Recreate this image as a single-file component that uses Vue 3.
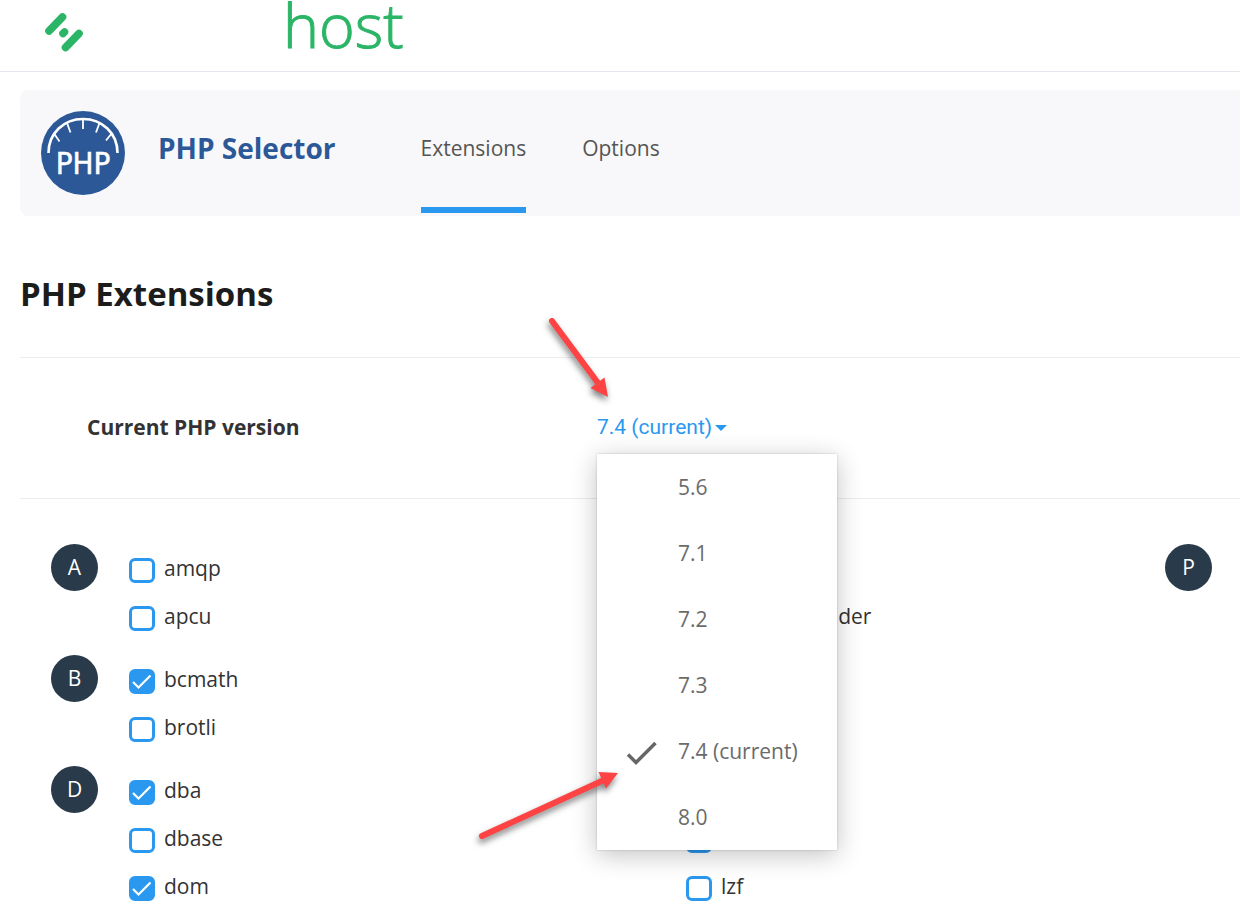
<script setup>
import { ref } from 'vue'

const versions = [
  { id: '5.6', label: '5.6' },
  { id: '7.1', label: '7.1' },
  { id: '7.2', label: '7.2' },
  { id: '7.3', label: '7.3' },
  { id: '7.4', label: '7.4 (current)' },
  { id: '8.0', label: '8.0' },
]
const selected = ref('7.4')

const columns = ref([
  [
    { letter: 'A', items: [{ name: 'amqp', on: false }, { name: 'apcu', on: false }] },
    { letter: 'B', items: [{ name: 'bcmath', on: true }, { name: 'brotli', on: false }] },
    {
      letter: 'D',
      items: [{ name: 'dba', on: true }, { name: 'dbase', on: false }, { name: 'dom', on: true }],
    },
  ],
  [
    { letter: 'I', items: [{ name: 'imap', on: true }, { name: 'ioncube_loader', on: false }] },
    { letter: 'J', items: [{ name: 'json', on: true }] },
    {
      letter: 'L',
      items: [
        { name: 'ldap', on: false },
        { name: 'leveldb', on: false },
        { name: 'luasandbox', on: true },
        { name: 'lzf', on: false },
      ],
    },
  ],
  [{ letter: 'P', items: [] }],
])
</script>

<template>
  <div class="page">
    <header class="topbar">
      <svg class="mark" width="40" height="40" viewBox="0 0 40 40" aria-hidden="true">
        <g stroke="#2bb567" stroke-width="7.600" stroke-linecap="round">
          <path d="M5 19L18.500 5" />
          <path d="M19 21.500L20.500 20" />
          <path d="M21.500 35.500L35 21.500" />
        </g>
      </svg>
      <span class="brand">host</span>
    </header>

    <main>
      <nav class="banner">
        <svg class="badge" width="84" height="84" viewBox="0 0 84 84" aria-hidden="true">
          <circle cx="42" cy="42" r="42" fill="#2c5898" />
          <g fill="none" stroke="#fff">
            <path d="M7.500 42C7.500 22 23 8 42 8S76.500 22 76.500 42" stroke-width="2.600" />
            <path
              d="M42 8v10M26 12l3.500 9.500M58.500 12l-3.500 9.500M13 22.500l5.500 8M71 22l-6 7.500"
              stroke-width="1.800"
            />
          </g>
          <text x="42" y="63" class="badge-text">PHP</text>
        </svg>
        <span class="product">PHP Selector</span>
        <a class="tab active" href="#extensions">Extensions</a>
        <a class="tab" href="#options">Options</a>
      </nav>

      <h1>PHP Extensions</h1>

      <section class="version">
        <span id="version-label" class="version-label">Current PHP version</span>
        <div class="dropdown">
          <button class="trigger" type="button" aria-haspopup="listbox" aria-expanded="true">
            7.4 (current)<span class="caret"></span>
          </button>
          <div class="menu" role="listbox" aria-labelledby="version-label">
            <button
              v-for="v in versions"
              :key="v.id"
              class="option"
              type="button"
              role="option"
              :aria-selected="v.id === selected"
              @click="selected = v.id"
            >
              <span class="tick">
                <svg v-if="v.id === selected" width="32" height="26" viewBox="0 0 32 26">
                  <path d="M2 13.500l8 8L29.500 2" fill="none" stroke="#666" stroke-width="3.500" />
                </svg>
              </span>
              {{ v.label }}
            </button>
          </div>
          <svg class="arrows" width="160" height="540" viewBox="0 0 160 540" aria-hidden="true">
            <g fill="#fd4343" stroke="#fd4343">
              <path d="M82 11L128 73" stroke-width="6" stroke-linecap="round" />
              <path d="M138 87L120.500 78L134.500 67.500z" stroke="none" />
              <path d="M12 526L134 470" stroke-width="6" stroke-linecap="round" />
              <path d="M148 463L136 478.500L128.500 462z" stroke="none" />
            </g>
          </svg>
        </div>
      </section>

      <div class="columns">
        <div v-for="(column, c) in columns" :key="c" class="column">
          <section v-for="group in column" :key="group.letter" class="group">
            <span class="letter">{{ group.letter }}</span>
            <div v-if="group.items.length" class="items">
              <label v-for="item in group.items" :key="item.name" class="item">
                <input v-model="item.on" type="checkbox" />
                <svg class="check" width="26" height="25" viewBox="0 0 26 25" aria-hidden="true">
                  <path d="M4 13l5.500 5.500L21.500 6.500" fill="none" stroke="#fff" stroke-width="2.200" />
                </svg>
                <span>{{ item.name }}</span>
              </label>
            </div>
          </section>
        </div>
      </div>
    </main>
  </div>
</template>

<style>
body {
  margin: 0;
  background: #fff;
}
html {
  overflow: hidden;
}
</style>

<style scoped>
.page {
  font-family: 'Open Sans', 'Noto Sans', sans-serif;
  font-size: 21px;
  line-height: 28px;
  color: #333;
}

.topbar {
  display: flex;
  align-items: flex-start;
  box-sizing: border-box;
  height: 72px;
  padding-left: 44px;
  border-bottom: 1px solid #e6e6ee;
}

.mark {
  margin-top: 12px;
}

.brand {
  margin-left: 199px;
  font-size: 61px;
  font-weight: 300;
  line-height: 50px;
  color: #2bb567;
  -webkit-text-stroke: 1px #2bb567;
}

main {
  padding-left: 20px;
}

.banner {
  display: flex;
  align-items: center;
  height: 126px;
  margin-top: 18px;
  padding-left: 21px;
  border-radius: 8px 0 0 8px;
  background: #f8f8fa;
}

.badge-text {
  font-family: 'DejaVu Sans Condensed', 'DejaVu Sans', sans-serif;
  font-size: 31px;
  font-stretch: condensed;
  fill: #fff;
  stroke: #fff;
  stroke-width: 0.5;
  text-anchor: middle;
}

.product {
  margin: 0 85px 10px 33px;
  font-size: 28px;
  font-weight: 700;
  color: #2c5898;
}

.tab {
  box-sizing: border-box;
  height: 120px;
  margin-right: 56px;
  padding-top: 41px;
  border-bottom: 6px solid transparent;
  color: #555;
  text-decoration: none;
}

.tab.active {
  border-bottom-color: #2b98f0;
}

h1 {
  margin: 56px 0 0;
  padding-bottom: 41px;
  border-bottom: 1px solid #ececec;
  font-size: 33px;
  line-height: 44px;
  font-weight: 700;
  color: #1c1c1c;
}

.version {
  display: grid;
  grid-template-columns: 510fr 643fr;
  align-items: center;
  box-sizing: border-box;
  height: 141px;
  padding: 0 0 2px 67px;
  border-bottom: 1px solid #ececec;
}

.version-label {
  font-weight: 700;
}

.dropdown {
  position: relative;
}

.trigger {
  display: flex;
  align-items: center;
  gap: 3px;
  padding: 0;
  border: 0;
  background: none;
  font: 21px/28px Roboto, sans-serif;
  color: #2b98f0;
}

.caret {
  margin-top: 2px;
  border: 6px solid transparent;
  border-top-color: #2b98f0;
  border-bottom: 0;
}

.menu {
  position: absolute;
  z-index: 1;
  top: 41px;
  left: 0;
  width: 240px;
  background: #fff;
  box-shadow: 0 5px 24px rgba(0, 0, 0, 0.24), 0 0 2px rgba(0, 0, 0, 0.2);
}

.option {
  display: flex;
  align-items: center;
  width: 100%;
  height: 66px;
  padding: 0 0 0 29px;
  border: 0;
  background: none;
  font: inherit;
  color: #6b6b6b;
}

.tick {
  display: flex;
  width: 52px;
  padding-top: 6px;
}

.arrows {
  position: absolute;
  z-index: 2;
  top: -103px;
  left: -127px;
  pointer-events: none;
  filter: drop-shadow(-1px 4px 3px rgba(0, 0, 0, 0.5));
}

.columns {
  display: grid;
  grid-template-columns: 1fr 1fr auto;
  padding: 45px 28px 0 31px;
}

.group {
  display: flex;
  align-items: flex-start;
  gap: 31px;
  margin-bottom: 15px;
}

.letter {
  width: 47px;
  border-radius: 50%;
  background: #293a4a;
  color: #fff;
  line-height: 47px;
  text-align: center;
}

.item {
  display: flex;
  align-items: center;
  position: relative;
  height: 48px;
  gap: 9px;
}

.item input {
  appearance: none;
  box-sizing: border-box;
  width: 26px;
  height: 25px;
  margin: 5px 0 0;
  border: 3px solid #2b98f0;
  border-radius: 6px;
  background: #fff;
}

.item input:checked {
  background: #2b98f0;
}

.check {
  position: absolute;
  top: 14px;
  left: 0;
  visibility: hidden;
  pointer-events: none;
}

.item input:checked + .check {
  visibility: visible;
}
</style>
